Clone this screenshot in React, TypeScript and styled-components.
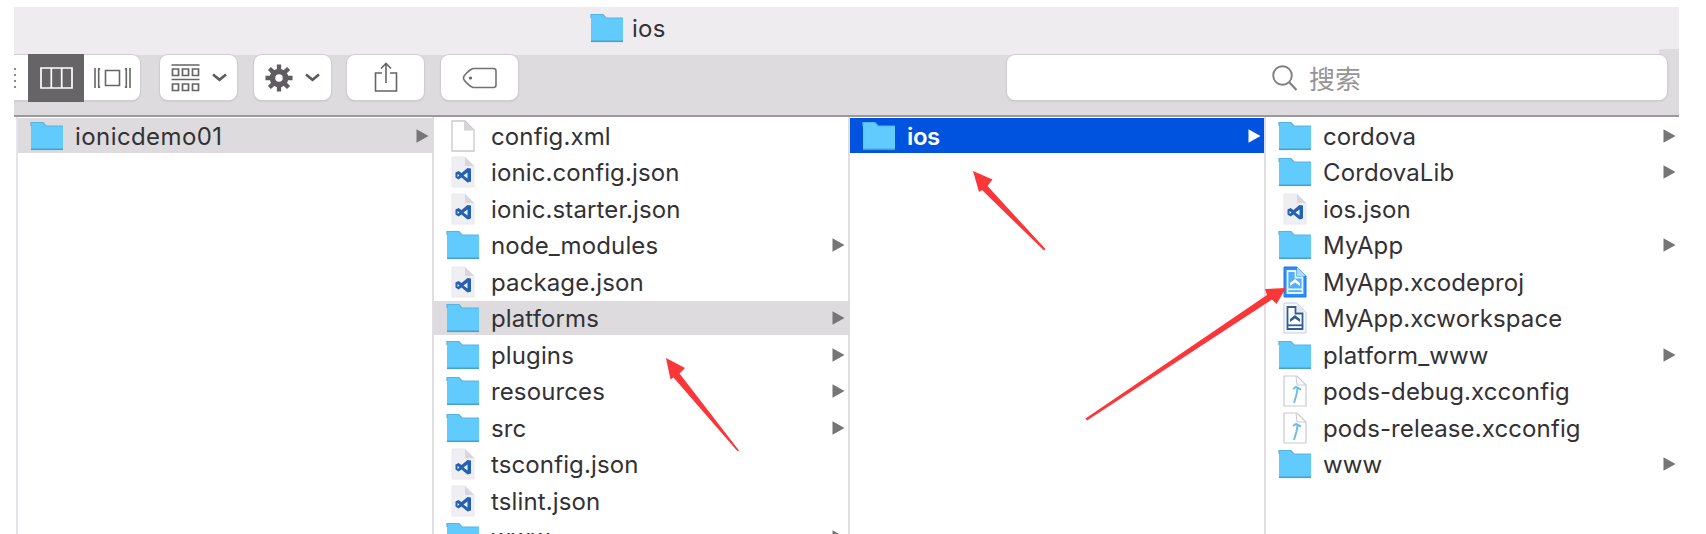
import React from "react";
import styled, { createGlobalStyle, css } from "styled-components";

const GlobalStyle = createGlobalStyle`
  * { box-sizing: border-box; }
  body { margin: 0; background: #fff; overflow: hidden; }
`;

const Page = styled.div`
  position: relative;
  width: 1706px;
  height: 534px;
  overflow: hidden;
  padding: 7px 27px 0 14px;
  background: #fff;
  font-family: Inter, "Noto Sans CJK SC", sans-serif;
  color: #333135;
`;

const Window = styled.div`
  display: flex;
  flex-direction: column;
  height: 527px;
  overflow: hidden;
`;

const TitleBar = styled.header`
  display: flex;
  align-items: center;
  gap: 8px;
  height: 48px;
  flex: none;
  padding: 0 0 7px 576px;
  background: linear-gradient(#dddbdd, #dddbdd) right bottom / 20px 6px no-repeat #eeecee;
  font-size: 24px;
  letter-spacing: 0.3px;
`;

const Title = styled.span`
  padding-top: 1px;
`;

const Toolbar = styled.div`
  display: flex;
  align-items: flex-start;
  flex: none;
  height: 62px;
  background: #dddbdd;
  border-bottom: 2px solid #9b999b;
`;

const Button = styled.div`
  display: flex;
  align-items: center;
  justify-content: center;
  gap: 12px;
  width: 77px;
  height: 45px;
  margin-right: 16.5px;
  border-radius: 8px;
  background: #fff;
  box-shadow: 0 0 0 1px #cfcdcf, 0 1px 2px #b5b3b5;
`;

const ViewSwitch = styled(Button)`
  width: 126px;
  margin-right: 20px;
  gap: 0;
  justify-content: flex-start;
  border-radius: 0 8px 8px 0;
`;

const Segment = styled.div<{ $active?: boolean; $width: number }>`
  display: flex;
  align-items: center;
  justify-content: center;
  width: ${(p) => p.$width}px;
  height: 48px;
  background: ${(p) => (p.$active ? "#666466" : "transparent")};
`;

const Search = styled(Button)`
  width: 660px;
  margin: 0 12px 0 auto;
  gap: 12px;
  padding-right: 41px;
  color: #969496;
  font-size: 26px;
`;

const Columns = styled.main`
  display: flex;
  flex: 1;
  min-height: 0;
  padding-left: 2px;
`;

const Column = styled.section<{ $width: number }>`
  width: ${(p) => p.$width}px;
  flex: none;
  padding-top: 1.4px;
  border-right: 2px solid #e0dee0;
  &:last-child { border-right: 0; }
`;

const FirstColumn = styled(Column)`
  border-left: 2px solid #e6e4ea;
`;

const Row = styled.div<{ $tone?: "grey" | "blue" }>`
  display: flex;
  align-items: center;
  height: 34.6px;
  margin-bottom: 1.92px;
  padding: 0 3px 0 12px;
  font-size: 24px;
  line-height: 33px;
  white-space: nowrap;
  ${(p) => p.$tone === "grey" && css`background: #dddbdd; margin-right: -2px; padding-right: 5px;`}
  ${(p) => p.$tone === "blue" && css`background: #0053df; color: #fff; font-weight: 600;`}
`;

const IconSlot = styled.span`
  display: flex;
  justify-content: center;
  width: 34px;
  margin-right: 11px;
`;

const Name = styled.span<{ $spacing: number }>`
  flex: 1;
  padding-top: 0.8px;
  letter-spacing: ${(p) => p.$spacing}px;
`;

const Overlay = styled.svg`
  position: absolute;
  inset: 0;
  pointer-events: none;
`;

const Folder = () => (
  <svg width="34" height="30" viewBox="0 0 34 30">
    <path d="M1 1.500h12l3 3.500h17v23.500H1z" fill="#62cbfe" />
    <path d="M1 5V1.500h12l3 3.500h17" fill="none" stroke="#56b4e2" strokeWidth="1.200" />
    <path d="M1 28.300h32" stroke="#4a9fcb" strokeWidth="1.600" />
  </svg>
);

const BlankPage = () => (
  <svg width="24" height="32" viewBox="0 0 24 32">
    <path d="M1 1h13l9 9v21H1z" fill="#fff" stroke="#c9c7c9" strokeWidth="1.300" />
    <path d="M13 1v9.500h10z" fill="#d5d3d5" />
  </svg>
);

const Code = () => (
  <svg width="24" height="32" viewBox="0 0 24 32">
    <path d="M1 1h13l9 9v21H1z" fill="#efeef2" stroke="#eae8ed" />
    <path d="M14 1v9h9z" fill="#d9d7db" />
    <path d="M20 12.500v13l-3.500 1-6-5-3 2-3-2v-5l3-1.500 3 2 6-5z" fill="#2461b1" />
    <path d="M16.500 16.500v6l-4-3zM6.500 18v3l2-1.500z" fill="#eef3fb" />
  </svg>
);

const Project = ({ bright }: { bright?: boolean }) => {
  const ink = bright ? "#2b84f0" : "#315c95";
  return (
    <svg width="24" height="32" viewBox="0 0 24 32">
      <path d="M1 1h13l9 9v21H1z" fill={bright ? "#2b8bf7" : "#f7f8fb"} stroke={bright ? "#1c78e8" : "#c3ccda"} />
      <path d="M14 1v9h9z" fill={bright ? "#a9dcff" : "#e2e8f0"} />
      <path
        d="M4.500 5h8v6.500h7V27h-15z"
        fill={bright ? "#52b0fb" : "#fff"}
        stroke={bright ? "#e3f4ff" : ink}
        strokeWidth="1.800"
      />
      <path d="M7 20v-3l5-4 5 4v3l-5-3.500z" fill={bright ? "#fff" : ink} />
      <path d="M5 23.300h14" stroke={bright ? "#e3f4ff" : ink} strokeWidth="1.800" />
    </svg>
  );
};

const Config = () => (
  <svg width="24" height="32" viewBox="0 0 24 32">
    <path d="M1 1h13l9 9v21H1z" fill="#fff" stroke="#cbc9cf" strokeWidth="1.200" />
    <path d="M13 1l1 9h9" fill="none" stroke="#cbc9cf" />
    <path d="M10 14l3-2 5 2.500M14.500 13.500l-1 6-2.500 8.500" fill="none" stroke="#6fbfe4" strokeWidth="2" />
  </svg>
);

const icons = {
  folder: <Folder />,
  page: <BlankPage />,
  code: <Code />,
  project: <Project bright />,
  workspace: <Project />,
  config: <Config />,
};

const Triangle = ({ color = "#777577" }: { color?: string }) => (
  <svg width="13" height="14" viewBox="0 0 13 14">
    <path d="M0.500 0.300L12.500 7L0.500 13.700z" fill={color} />
  </svg>
);

const Chevron = () => (
  <svg width="15" height="9" viewBox="0 0 15 9">
    <path d="M1 1.500l6.500 5.300L14 1.500" fill="none" stroke="#5c5a5c" strokeWidth="2.600" />
  </svg>
);

type Entry = { name: string; icon: keyof typeof icons; open?: boolean; tone?: "grey" | "blue" };

const root: Entry[] = [{ name: "ionicdemo01", icon: "folder", open: true, tone: "grey" }];
const project: Entry[] = [
  { name: "config.xml", icon: "page" },
  { name: "ionic.config.json", icon: "code" },
  { name: "ionic.starter.json", icon: "code" },
  { name: "node_modules", icon: "folder", open: true },
  { name: "package.json", icon: "code" },
  { name: "platforms", icon: "folder", open: true, tone: "grey" },
  { name: "plugins", icon: "folder", open: true },
  { name: "resources", icon: "folder", open: true },
  { name: "src", icon: "folder", open: true },
  { name: "tsconfig.json", icon: "code" },
  { name: "tslint.json", icon: "code" },
  { name: "www", icon: "folder", open: true },
];
const platforms: Entry[] = [{ name: "ios", icon: "folder", open: true, tone: "blue" }];
const ios: Entry[] = [
  { name: "cordova", icon: "folder", open: true },
  { name: "CordovaLib", icon: "folder", open: true },
  { name: "ios.json", icon: "code" },
  { name: "MyApp", icon: "folder", open: true },
  { name: "MyApp.xcodeproj", icon: "project" },
  { name: "MyApp.xcworkspace", icon: "workspace" },
  { name: "platform_www", icon: "folder", open: true },
  { name: "pods-debug.xcconfig", icon: "config" },
  { name: "pods-release.xcconfig", icon: "config" },
  { name: "www", icon: "folder", open: true },
];

const Rows = ({ items, spacing = 0.12 }: { items: Entry[]; spacing?: number }) => (
  <>
    {items.map((item) => (
      <Row key={item.name} $tone={item.tone}>
        <IconSlot>{icons[item.icon]}</IconSlot>
        <Name $spacing={spacing}>{item.name}</Name>
        {item.open && <Triangle color={item.tone === "blue" ? "#fff" : undefined} />}
      </Row>
    ))}
  </>
);

export default function App() {
  return (
    <Page>
      <GlobalStyle />
      <Window>
        <TitleBar>
          <Folder />
          <Title>ios</Title>
        </TitleBar>
        <Toolbar>
          <ViewSwitch>
            <Segment $width={14}>
              <svg width="14" height="24" viewBox="0 0 14 24">
                <path d="M0 3h2M0 9h2M0 15h2M0 21h2" stroke="#666466" strokeWidth="1.600" />
              </svg>
            </Segment>
            <Segment $active $width={57}>
              <svg width="33" height="22" viewBox="0 0 33 22">
                <path d="M1 1h31v20H1zM11.300 1v20M21.700 1v20" fill="none" stroke="#fff" strokeWidth="1.700" />
              </svg>
            </Segment>
            <Segment $width={57}>
              <svg width="37" height="22" viewBox="0 0 37 22">
                <path d="M1 1v20M4.700 1v20M32.300 1v20M36 1v20M4.700 2h1.500M4.700 20h1.500M30.800 2h1.500M30.800 20h1.500M11.500 3.500h14v15h-14z" fill="none" stroke="#666466" strokeWidth="1.600" />
              </svg>
            </Segment>
          </ViewSwitch>
          <Button>
            <svg width="29" height="28" viewBox="0 0 29 28">
              <path d="M0.500 1h28M0.500 15.500h28M1.500 5h6v6.500h-6zM11.500 5h6v6.500h-6zM21.500 5h6v6.500h-6zM1.500 20h6v6.500h-6zM11.500 20h6v6.500h-6zM21.500 20h6v6.500h-6z" fill="none" stroke="#666466" strokeWidth="1.700" />
            </svg>
            <Chevron />
          </Button>
          <Button>
            <svg width="28" height="28" viewBox="-15 -15 30 30">
              {[0, 45, 90, 135].map((a) => (
                <path key={a} d="M0-14.500V-7M0 7V14.500" transform={`rotate(${a})`} stroke="#5f5d5f" strokeWidth="4.600" />
              ))}
              <circle r="7" fill="none" stroke="#5f5d5f" strokeWidth="6" />
            </svg>
            <Chevron />
          </Button>
          <Button>
            <svg width="24" height="31" viewBox="0 0 24 31">
              <path d="M8 11H1.500v18h21V11H16M12 21V2M7 6.500l5-5 5 5" fill="none" stroke="#666466" strokeWidth="1.600" />
            </svg>
          </Button>
          <Button>
            <svg width="35" height="22" viewBox="0 0 35 22">
              <path d="M11 1.500h20.500a2.500 2.500 0 0 1 2.500 2.500v14a2.500 2.500 0 0 1-2.500 2.500H11Q7 19 2.500 13.500q-2-2.500 0-5Q7 3 11 1.500z" fill="none" stroke="#737173" strokeWidth="1.600" />
              <circle cx="8.500" cy="11" r="1.600" fill="#666466" />
            </svg>
          </Button>
          <Search>
            <svg width="25" height="26" viewBox="0 0 25 26">
              <circle cx="10.500" cy="10.500" r="9.300" fill="none" stroke="#807e80" strokeWidth="1.900" />
              <path d="M17 17l7.500 8" stroke="#807e80" strokeWidth="2.200" />
            </svg>
            <span>搜索</span>
          </Search>
        </Toolbar>
        <Columns>
          <FirstColumn $width={418}><Rows items={root} spacing={0.42} /></FirstColumn>
          <Column $width={416}><Rows items={project} /></Column>
          <Column $width={416}><Rows items={platforms} spacing={-0.4} /></Column>
          <Column $width={413}><Rows items={ios} /></Column>
        </Columns>
      </Window>
      <Overlay width="1706" height="534" viewBox="0 0 1706 534">
        <g fill="#fb3639">
          <path d="M973 171l19.500 8.500-5 6.500L1045.500 249l-1.500 1.500L982 190l-3 2z" />
          <path d="M666 358l19 10-5.500 5.500L739 450.500l-1.500.8L673.500 377.500l-3 2z" />
          <path d="M1286 288l-9.500 16-4.500-4.500L1087 420.500l-1.500-2L1267 295l-2-6z" />
        </g>
      </Overlay>
    </Page>
  );
}
